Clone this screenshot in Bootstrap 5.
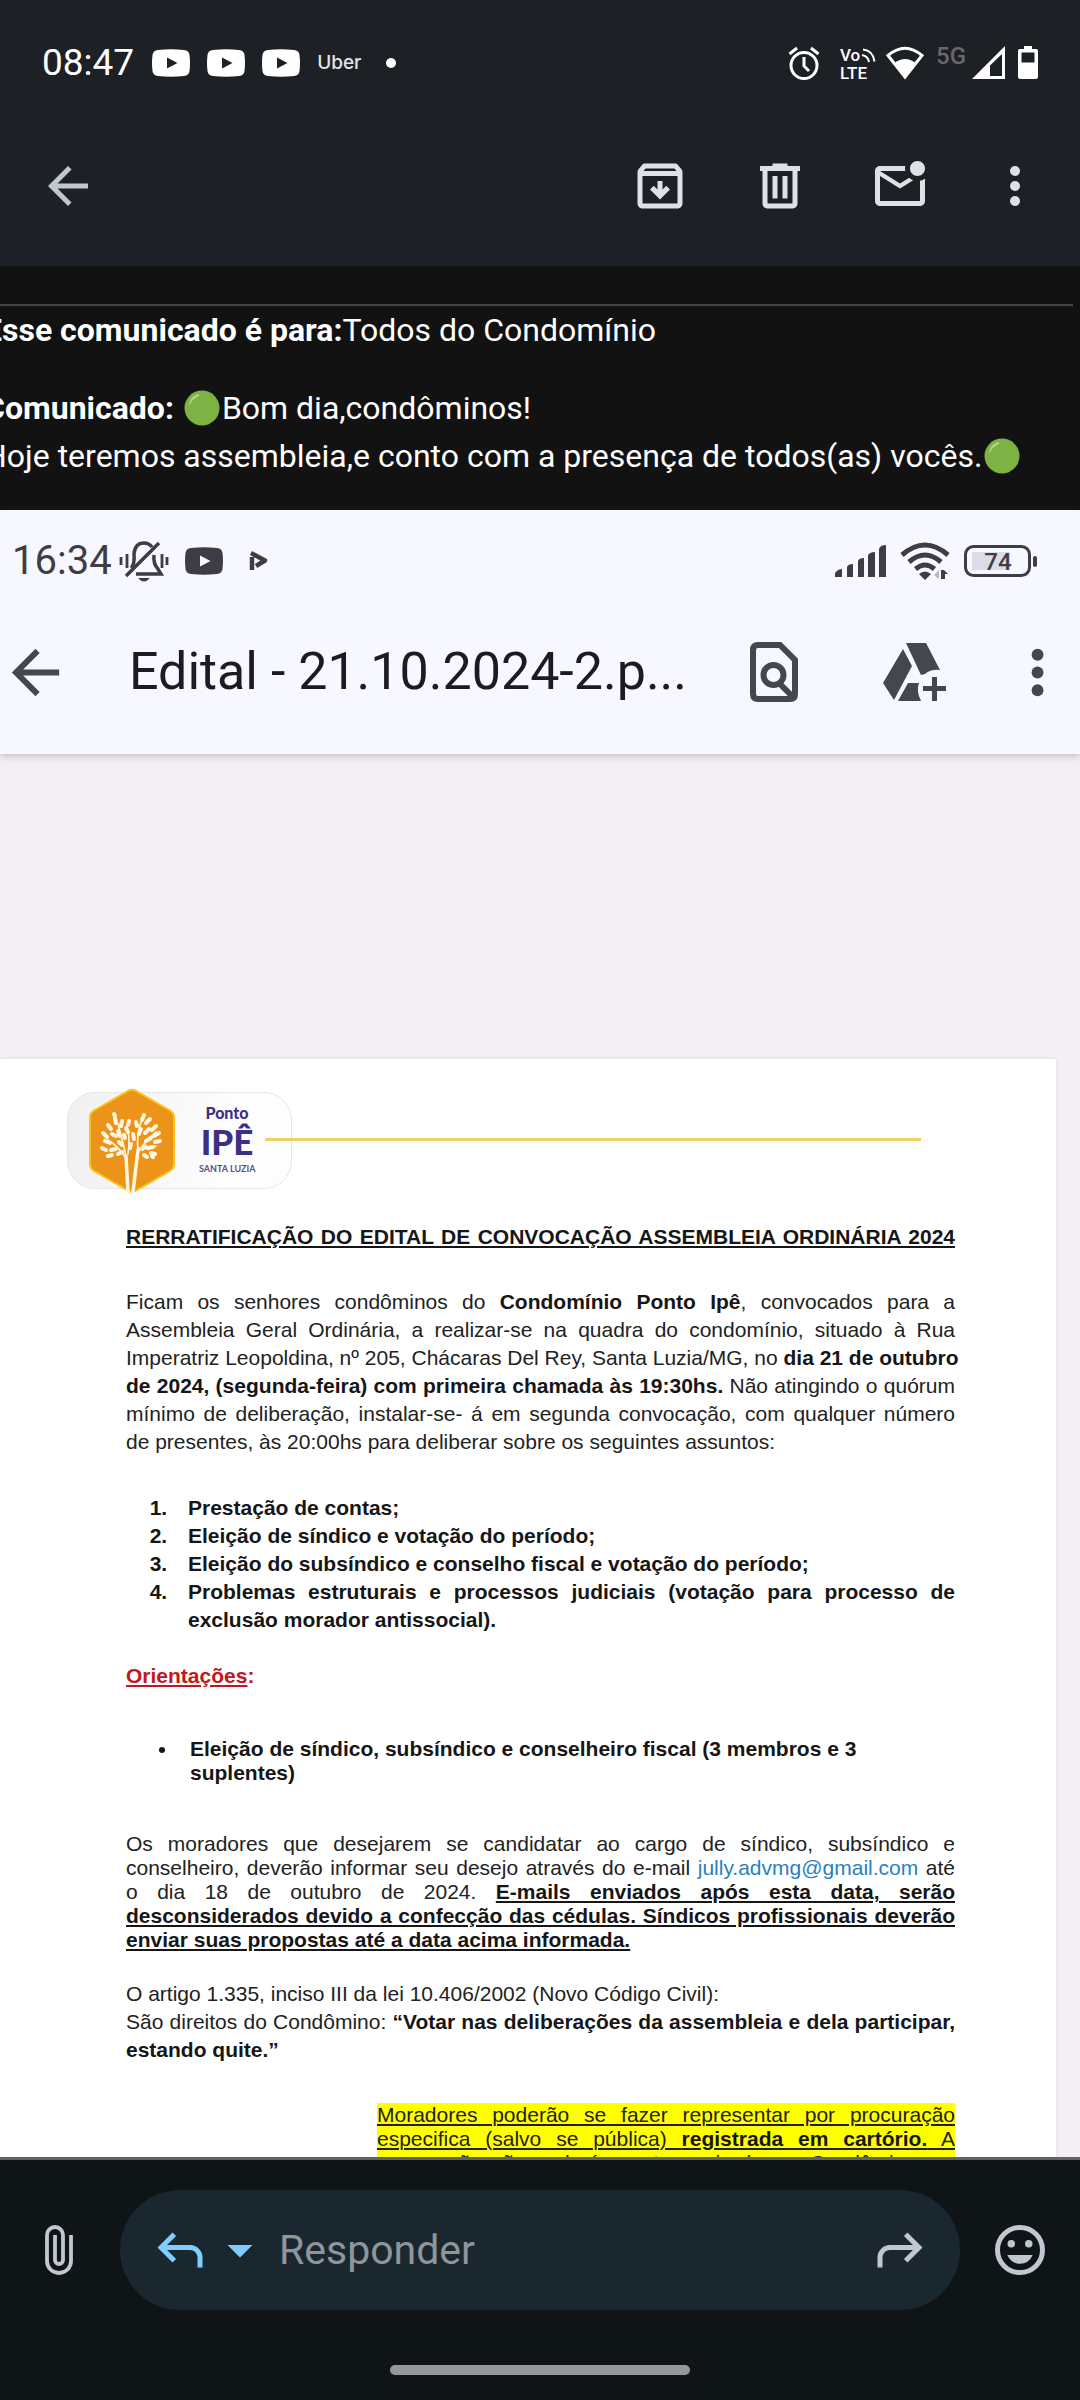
<!DOCTYPE html>
<html lang="pt-BR">
<head>
<meta charset="utf-8">
<meta name="viewport" content="width=device-width, initial-scale=1">
<title>Comunicado</title>
<link href="https://cdn.jsdelivr.net/npm/bootstrap@5.3.0/dist/css/bootstrap.min.css" rel="stylesheet">
<style>
  body { background: #0f1416; font-family: Roboto, sans-serif; }
  svg { display: block; flex: none; }
  .btn-plain { border: 0; background: none; padding: 0; color: inherit; flex: none; }
  .screen { height: 100vh; }

  /* phone status bar and mail toolbar */
  .mail-top { background: #1d2024; color: #dee1e6; flex: none; padding-bottom: 20px; }
  .phone-status { height: 126px; padding: 0 42px; color: #fff; }
  .clock { font-size: 37px; line-height: 48px; margin-right: 18px; }
  .app-icon { margin-right: 17px; }
  .app-tag { font: 500 19px/24px Inter, sans-serif; color: #e4e4e6; }
  .net-tag { font-size: 24px; line-height: 24px; font-weight: 500; color: #66686b; margin: 44px 6px 0 11px; align-self: flex-start; }
  .sys-volte { margin: 0 8px 0 19px; }
  .sys-battery { margin-left: 13px; }
  .mail-tools { height: 120px; padding: 0 35px 0 38px; }
  .tool-set { gap: 60px; }
  .tool-more { margin-left: -5px; }
  .back-tint { color: #c0c7d0; }

  /* message body */
  .message { background: #121212; min-height: 0; }
  .msg-text { color: #fff; font-size: 32px; line-height: 48px; margin-left: -16px; white-space: nowrap; padding: 38px 7px 0 0; }
  .msg-text hr { margin: 0; border-top: 2px solid #444; opacity: 1; }
  .msg-text p { margin-bottom: 30px; }
  .dot-green { width: 36px; height: 36px; display: inline-block; vertical-align: -7px; margin: 0 2px; }

  /* attached document viewer */
  .viewer { background: #f3eff4; }
  .viewer-top { background: #f7f7ff; color: #43474e; height: 244px; box-shadow: 0 1px 8px rgba(60, 60, 70, .35); position: relative; }
  .viewer-status { height: 102px; padding: 0 42px 0 12px; color: #3e3d43; }
  .viewer-status .clock { font-size: 40px; margin: 0 7px 0 0; }
  .cell { width: 74px; height: 32px; }
  .play-mark { margin-left: 26px; }
  .wifi-mark { margin: 0 14px 0 13px; }
  .viewer-bar { height: 120px; padding: 0 4px 0 0; }
  .doc-name { font-size: 52px; line-height: 64px; color: #1d1b20; margin: 0; font-weight: 400; padding-left: 58px; }
  .drive-btn { margin: 0 58px 0 85px; }
  .sheet { background: #fff; margin: 305px 24px 0 0; padding: 33px 0 40px; box-shadow: 0 0 4px rgba(0, 0, 0, .1); }
  .brand { width: 225px; height: 97px; margin-left: 67px; border-radius: 28px; background: linear-gradient(100deg, #f0f0f0, #fdfdfd 70%); border: 1px solid #e6e6e6; font-family: Lato, sans-serif; color: #3b2f86; flex: none; }
  .brand svg { margin: -4px 0 -4px 20px; }
  .brand-words { margin-left: 23px; text-align: center; width: 56px; }
  .brand-a { font-size: 16px; line-height: 16px; font-weight: 900; }
  .brand-b { font-size: 35px; line-height: 40px; font-weight: 900; }
  .brand-c { font-size: 9px; line-height: 16px; color: #55508a; white-space: nowrap; font-weight: 700; }
  .rule-gold { height: 3px; background: #ecd263; margin: 0 135px 2px -27px; position: relative; }

  .edital { font-family: "Liberation Sans", Arial, sans-serif; font-size: 21px; line-height: 28px; color: #222; padding: 34px 101px 0 126px; text-align: justify; }
  .edital b, .edital h1, .edital li { color: #161616; font-weight: 700; }
  .edital h1 { font-size: 21px; line-height: 28px; margin: 0 0 37px; text-align-last: justify; }
  .edital u, .edital h1 { text-decoration: underline; text-decoration-thickness: 2px; text-underline-offset: 2px; }
  .edital p, .edital ul, .edital ol { margin: 0; }
  .edital .agenda { margin: 38px 0 28px; padding-left: 47px; }
  .agenda li { padding-left: 15px; }
  .edital .orient { color: #c4161c; font-weight: 700; }
  .edital .notes { margin: 47px 0; padding-left: 52px; line-height: 24px; text-align: left; }
  .notes li { padding-left: 12px; }
  .edital .tight { line-height: 24px; }
  .edital .law { margin: 28px 0 39px; }
  .edital .proxy { margin-left: 251px; background: #ff0; text-decoration: underline; text-decoration-thickness: 2px; text-underline-offset: 2px; }
  .edital a { color: #2a80c0; text-decoration: none; }

  /* reply bar */
  .reply-zone { background: #0f1416; border-top: 3px solid #5f6368; flex: none; color: #c1c6d0; padding-top: 30px; }
  .reply-row { padding: 0 30px; gap: 30px; }
  .reply-pill { background: #1b272e; height: 120px; border-radius: 60px; padding: 0 30px; min-width: 0; }
  .reply-tint { color: #80ceff; }
  .reply-input { background: none; border: 0; color: #fff; font-size: 41px; line-height: 48px; min-width: 0; padding: 0 0 0 9px; outline: 0; }
  .reply-input::placeholder { color: #8e969c; opacity: 1; }
  .home-bar { width: 300px; height: 10px; border-radius: 5px; background: #969799; margin: 55px auto 25px; }
</style>
</head>
<body>
<svg width="0" height="0" class="position-absolute" aria-hidden="true">
  <defs>
    <symbol id="i-yt" viewBox="0 0 38 28"><path fill="currentColor" fill-rule="evenodd" d="M6 1Q19-.5 32 1q5 .5 5.500 5 1 8 0 16-.5 4.500-5.500 5-13 1.500-26 0-5-.5-5.500-5-1-8 0-16Q1 1.500 6 1zM15 8.500v11L25.500 14z"/></symbol>
    <symbol id="i-back" viewBox="0 0 24 24"><path fill="currentColor" d="M20 11H7.830l5.590-5.590L12 4l-8 8 8 8 1.410-1.410L7.830 13H20z"/></symbol>
    <symbol id="i-more" viewBox="0 0 24 24"><g fill="currentColor"><circle cx="12" cy="6" r="2"/><circle cx="12" cy="12" r="2"/><circle cx="12" cy="18" r="2"/></g></symbol>
    <symbol id="i-reply" viewBox="0 0 24 24"><path fill="currentColor" d="M19 19v-4c0-.83-.29-1.540-.88-2.130C17.540 12.290 16.830 12 16 12H6.830l3.600 3.600L9 17l-6-6 6-6 1.430 1.400L6.830 10H16c1.380 0 2.560.49 3.540 1.460C20.510 12.440 21 13.630 21 15v4z"/></symbol>
    <symbol id="i-green" viewBox="0 0 36 36"><circle cx="18" cy="18" r="17.500" fill="#7cb342"/><path d="M5 14Q7 6 14 4q2 0 1 2Q8 9 6 15z" fill="#aed581"/></symbol>
  </defs>
</svg>

<div class="screen d-flex flex-column overflow-hidden">
  <header class="mail-top">
    <div class="phone-status d-flex align-items-center">
      <span class="clock">08:47</span>
      <svg width="38" height="28" class="app-icon"><use href="#i-yt"/></svg>
      <svg width="38" height="28" class="app-icon"><use href="#i-yt"/></svg>
      <svg width="38" height="28" class="app-icon"><use href="#i-yt"/></svg>
      <span class="app-tag">Uber</span>
      <svg width="40" height="12" viewBox="0 0 40 12" class="ms-2"><circle cx="22" cy="6" r="5" fill="#fff"/></svg>
      <svg width="32" height="34" viewBox="0 0 32 34" class="ms-auto"><g fill="none" stroke="#fff" stroke-width="3"><circle cx="16" cy="19.500" r="13"/><path d="M16 11v9l5 5M1.500 8 9 2M23 2l7.500 6" /></g></svg>
      <svg width="38" height="34" viewBox="0 0 38 34" class="sys-volte"><g fill="#fff" font-family="Roboto, sans-serif" font-weight="500" font-size="17"><text x="1" y="15">Vo</text><text x="1" y="33">LTE</text></g><g fill="none" stroke="#fff" stroke-width="2"><path d="M24 3.500q10 1 11.500 12M23 9q6 1 7 7"/></g></svg>
      <svg width="40" height="34" viewBox="0 0 40 34"><path d="M3 9.500Q20-5 37 9.500L20 31z" fill="none" stroke="#fff" stroke-width="3"/><path d="M9.500 17q10.500-8 21 0L20 32z" fill="#fff"/></svg>
      <span class="net-tag">5G</span>
      <svg width="33" height="34" viewBox="0 0 33 34"><path fill="#fff" fill-rule="evenodd" d="M33 0v33H0zM30 8 18 19.500V30h12z"/></svg>
      <svg width="20" height="34" viewBox="0 0 20 34" class="sys-battery"><path fill="#fff" fill-rule="evenodd" d="M6 0h8v3h4q2 0 2 2v26q0 2-2 2H2q-2 0-2-2V5q0-2 2-2h4zM3.500 6.500v10h13v-10z"/></svg>
    </div>
    <nav class="mail-tools d-flex align-items-center justify-content-between">
      <button class="btn-plain back-tint" aria-label="Voltar"><svg width="60" height="60"><use href="#i-back"/></svg></button>
      <div class="tool-set d-flex">
        <button class="btn-plain" aria-label="Arquivar"><svg width="60" height="60" viewBox="0 0 24 24"><path fill="currentColor" fill-rule="evenodd" d="m20.540 5.230-1.390-1.680C18.880 3.210 18.470 3 18 3H6c-.47 0-.88.21-1.160.55L3.460 5.230C3.170 5.570 3 6.020 3 6.500V19c0 1.100.9 2 2 2h14c1.100 0 2-.9 2-2V6.500c0-.48-.17-.93-.46-1.270zM6.240 5h11.520l.83 1H5.420zM5 19V8h14v11zM11 10h2v3.400l1.500-1.500 1.500 1.500-4 4-4-4 1.500-1.500 1.500 1.500z"/></svg></button>
        <button class="btn-plain" aria-label="Excluir"><svg width="60" height="60" viewBox="0 0 24 24"><path fill="currentColor" fill-rule="evenodd" d="M15 4V3H9v1H4v2h1v13c0 1.100.9 2 2 2h10c1.100 0 2-.9 2-2V6h1V4zm2 15H7V6h10zM9 8h2v9H9zm4 0h2v9h-2z"/></svg></button>
        <button class="btn-plain" aria-label="Marcar como não lido"><svg width="60" height="60" viewBox="0 0 24 24"><path fill="currentColor" d="M22 8.980V18c0 1.100-.9 2-2 2H4c-1.100 0-2-.9-2-2V6c0-1.100.9-2 2-2h10.100c-.06.32-.1.66-.1 1s.04.68.1 1H4l8 5 3.670-2.290c.47.43 1.020.76 1.630.98L12 13 4 8v10h16V9.900c.74-.15 1.420-.48 2-.92zM16 5c0 1.660 1.340 3 3 3s3-1.340 3-3-1.340-3-3-3-3 1.340-3 3z"/></svg></button>
        <button class="btn-plain tool-more" aria-label="Mais opções"><svg width="60" height="60"><use href="#i-more"/></svg></button>
      </div>
    </nav>
  </header>

  <main class="message flex-grow-1 overflow-hidden">
    <div class="msg-text">
      <hr>
      <p><b>Esse comunicado é para:</b>Todos do Condomínio</p>
      <p><b>Comunicado:</b> <svg class="dot-green"><use href="#i-green"/></svg>Bom dia,condôminos!<br>Hoje teremos assembleia,e conto com a presença de todos(as) vocês.<svg class="dot-green"><use href="#i-green"/></svg></p>
    </div>

    <section class="viewer">
      <div class="viewer-top">
        <div class="viewer-status d-flex align-items-center">
          <span class="clock">16:34</span>
          <svg width="50" height="42" viewBox="0 0 50 42"><g fill="none" stroke="currentColor" stroke-width="3.500"><path d="M12 28q4-4 3-14 1-11 10-11 5 0 8 4M35 15q-1 9 4 14l3 5H17M7 36 40 3"/><path stroke-width="2.800" d="M2 17v8M8 14v14M43 14v14M48 17v8"/></g><path d="M19 38h12q-6 7-12 0z" fill="currentColor"/></svg>
          <svg width="38" height="28" class="ms-3"><use href="#i-yt"/></svg>
          <svg width="20" height="22" viewBox="0 0 20 22" class="play-mark"><g fill="none" stroke="currentColor" stroke-width="4.500" stroke-linejoin="round"><path d="M3 7v13"/><path d="M2 3 16 10.500 7 16"/></g></svg>
          <svg width="52" height="34" viewBox="0 0 52 34" class="ms-auto"><path fill="currentColor" d="M0 33v-4q3-4 7-4v8zM12 33V23q1-3 6-3v13zM23 33V17q1-3 6-3v19zM33 33V11q2-3 7-3v25zM44 33V5q1-4 7-4v32z"/></svg>
          <svg width="50" height="38" viewBox="0 0 50 38" class="wifi-mark"><g fill="none" stroke="currentColor" stroke-width="5"><path d="M2 13Q25-7 48 13M9 20q16-14 32 0M15.500 27q9.500-8 19 0"/></g><path d="M19 32q6-5 12 0l-6 6zM41 37V28h3l4 4h-3v5z" fill="currentColor"/><path d="M39 28v9l-5-4z" fill="#bbb"/></svg>
          <svg class="cell" viewBox="0 0 74 32"><rect x="8" y="7" width="38" height="18" fill="#dddce6"/><rect x="1.500" y="1.500" width="64" height="29" rx="8" fill="none" stroke="currentColor" stroke-width="3"/><rect x="69" y="11" width="4" height="11" rx="2" fill="currentColor"/><text x="34" y="25" text-anchor="middle" font-family="Roboto, sans-serif" font-weight="500" font-size="24" fill="currentColor">74</text></svg>
        </div>
        <div class="viewer-bar d-flex align-items-center">
          <button class="btn-plain" aria-label="Voltar"><svg width="71" height="71"><use href="#i-back"/></svg></button>
          <h2 class="doc-name flex-grow-1 text-nowrap">Edital - 21.10.2024-2.p...</h2>
          <button class="btn-plain" aria-label="Localizar no documento"><svg width="48" height="60" viewBox="0 0 48 60"><path d="M30 3H8Q3 3 3 8v44q0 5 5 5h32q5 0 5-5V18zM42 54 29 41" fill="none" stroke="currentColor" stroke-width="6"/><circle cx="23.500" cy="33" r="10" fill="none" stroke="currentColor" stroke-width="6"/></svg></button>
          <button class="btn-plain drive-btn" aria-label="Adicionar ao Drive"><svg width="64" height="58" viewBox="0 0 64 58"><path fill="currentColor" d="M20 6 29 23 11 57 0 40zM23 0h20l14 27q-9-1-15 4L38 32zM25 40h11q-3 8 2 18H15zM49 34h5v9h9v5h-9v10h-5V48h-9v-5h9z"/></svg></button>
          <button class="btn-plain" aria-label="Mais opções"><svg width="71" height="71" viewBox="1 0 24 24"><use href="#i-more" width="24" height="24"/></svg></button>
        </div>
      </div>

      <article class="sheet">
        <div class="d-flex align-items-center">
          <div class="brand d-flex align-items-center">
            <svg width="88" height="106" viewBox="0 0 88 106"><path d="M41 2.500q3-1.500 6 0l35 20q4 2.500 4 7v46q0 5-4 7.500l-35 20q-3 1.500-6 0l-35-20q-4-2.500-4-7.500v-46q0-4.500 4-7z" fill="#ec9419" stroke="#fbc31a" stroke-width="2"/>
            <g stroke="#fff6e0" fill="none" stroke-linecap="round"><path stroke-width="3.500" d="M40 104 38 68M45 104 50 62"/><path stroke-width="1.600" d="M38 70Q30 58 20 52M38 68Q34 50 30 36M50 64Q48 44 54 32M50 64Q58 52 68 44M40 66Q42 52 40 44M50 60Q62 62 68 58"/><path stroke-width="4" d="M14 60l4 2M17 53l5 2M15 45l4 4M20 37l3 4M27 30l1 5M34 33l-1 5M24 46l4 2M30 43l2 5M23 62l5-1M30 66l4-2M20 68l4-1M31 54l3 3M38 40l2 4M41 33l-1 4M48 34l1 4M56 27l-2 5M62 31l-4 4M53 41l-2 5M61 41l-4 4M68 38l-4 4M71 45l-5 3M63 50l-5 3M72 53l-5 1M65 59l-5 1M57 58l-3 3M67 66l-4-1M59 69l-3-2M45 46l1 5M43 56l-1 4M36 47l1 3M26 26l1 2M64 68l1 1"/></g></svg>
            <div class="brand-words"><div class="brand-a">Ponto</div><div class="brand-b">IPÊ</div><div class="brand-c">SANTA LUZIA</div></div>
          </div>
          <div class="rule-gold flex-grow-1"></div>
        </div>
        <div class="edital">
          <h1>RERRATIFICAÇÃO DO EDITAL DE CONVOCAÇÃO ASSEMBLEIA ORDINÁRIA 2024</h1>
          <p>Ficam os senhores condôminos do <b>Condomínio Ponto Ipê</b>, convocados para a Assembleia Geral Ordinária, a realizar-se na quadra do condomínio, situado à Rua <span class="text-nowrap">Imperatriz Leopoldina, nº 205, Chácaras Del Rey, Santa Luzia/MG, no <b>dia 21 de outubro</b></span> <span class="text-nowrap"><b>de 2024, (segunda-feira) com primeira chamada às 19:30hs.</b> Não atingindo o quórum</span> mínimo de deliberação, instalar-se- á em segunda convocação, com qualquer número de presentes, às 20:00hs para deliberar sobre os seguintes assuntos:</p>
          <ol class="agenda">
            <li>Prestação de contas;</li>
            <li>Eleição de síndico e votação do período;</li>
            <li>Eleição do subsíndico e conselho fiscal e votação do período;</li>
            <li>Problemas estruturais e processos judiciais (votação para processo de exclusão morador antissocial).</li>
          </ol>
          <p class="orient"><u>Orientações</u>:</p>
          <ul class="notes"><li>Eleição de síndico, subsíndico e conselheiro fiscal (3 membros e 3 suplentes)</li></ul>
          <p class="tight">Os moradores que desejarem se candidatar ao cargo de síndico, subsíndico e conselheiro, deverão informar seu desejo através do e-mail <a href="mailto:jully.advmg@gmail.com">jully.advmg@gmail.com</a> até o dia 18 de outubro de 2024. <b><u>E-mails enviados após esta data, serão desconsiderados devido a confecção das cédulas. Síndicos profissionais deverão enviar suas propostas até a data acima informada.</u></b></p>
          <p class="law">O artigo 1.335, inciso III da lei 10.406/2002 (Novo Código Civil):<br>São direitos do Condômino: <b>“Votar nas deliberações da assembleia e dela participar, estando quite.”</b></p>
          <p class="proxy tight">Moradores poderão se fazer representar por procuração especifica (salvo se pública) <b>registrada em cartório.</b> A procuração não poderá constar mais de um Condômino em representação.</p>
        </div>
      </article>
    </section>
  </main>

  <footer class="reply-zone">
    <div class="reply-row d-flex align-items-center">
      <button class="btn-plain" aria-label="Anexar"><svg width="60" height="60" viewBox="0 0 60 60"><path d="M41 15v26a12 12 0 0 1-24 0V15a8 8 0 0 1 16 0v25a4 4 0 0 1-8 0V15" fill="none" stroke="currentColor" stroke-width="3.800"/></svg></button>
      <div class="reply-pill d-flex align-items-center flex-grow-1">
        <button class="btn-plain reply-tint" aria-label="Responder"><svg width="60" height="60"><use href="#i-reply"/></svg></button>
        <button class="btn-plain reply-tint" aria-label="Tipo de resposta"><svg width="60" height="60" viewBox="0 0 24 24"><path d="M7 10l5 5 5-5z" fill="currentColor"/></svg></button>
        <input class="reply-input flex-grow-1" type="text" placeholder="Responder" aria-label="Mensagem de resposta">
        <button class="btn-plain" aria-label="Encaminhar"><svg width="60" height="60" viewBox="0 0 24 24"><g transform="matrix(-1 0 0 1 24 0)"><use href="#i-reply" width="24" height="24"/></g></svg></button>
      </div>
      <button class="btn-plain" aria-label="Reagir com emoji"><svg width="60" height="60" viewBox="0 0 24 24"><circle cx="12" cy="12" r="9" fill="none" stroke="currentColor" stroke-width="2"/><g fill="currentColor"><circle cx="8.500" cy="9.500" r="1.500"/><circle cx="15.500" cy="9.500" r="1.500"/><path d="M6.900 14h10.200q-1.600 3.500-5.100 3.500T6.900 14z"/></g></svg></button>
    </div>
    <div class="home-bar"></div>
  </footer>
</div>
<script src="https://cdn.jsdelivr.net/npm/bootstrap@5.3.0/dist/js/bootstrap.bundle.min.js"></script>
</body>
</html>
